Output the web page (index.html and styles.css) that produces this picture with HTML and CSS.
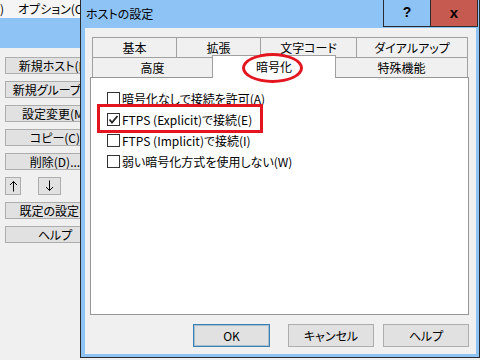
FILE: index.html
```html
<!DOCTYPE html>
<html lang="ja">
<head>
    <meta charset="UTF-8">
    <title>ホストの設定</title>
    <link rel="stylesheet" href="styles.css">
</head>
<body>

    <div class="app">
        <div class="menubar">
            <span class="menu-cut">)</span>
            <span class="menu-item">オプション(O)</span>
        </div>
        <div class="toolbar"></div>
        <div class="side">
            <button class="side-btn">新規ホスト(N)</button>
            <button class="side-btn">新規グループ(G)</button>
            <button class="side-btn">設定変更(M)</button>
            <button class="side-btn">コピー(C)</button>
            <button class="side-btn">削除(D)...</button>
            <div class="arrows">
                <button class="side-btn up">
                    <svg width="9" height="12" viewBox="0 0 9 12"><path d="M4.5 1.5V11.5M1 5L4.5 1.5L8 5" fill="none" stroke="#000" stroke-width="1"/></svg>
                </button>
                <button class="side-btn down">
                    <svg width="9" height="12" viewBox="0 0 9 12"><path d="M4.5 0.5V10.5M1 7L4.5 10.5L8 7" fill="none" stroke="#000" stroke-width="1"/></svg>
                </button>
            </div>
            <button class="side-btn">既定の設定(I)</button>
            <button class="side-btn">ヘルプ</button>
        </div>
    </div>

    <div class="dialog">
        <div class="titlebar">
            <span class="title">ホストの設定</span>
            <span class="cap-btn help">?</span>
            <span class="cap-btn close">x</span>
        </div>
        <div class="client">
            <div class="tab-row">
                <div class="tab w85">基本</div>
                <div class="tab w85">拡張</div>
                <div class="tab w97">文字コード</div>
                <div class="tab w112">ダイアルアップ</div>
            </div>
            <div class="tab-row">
                <div class="tab w121">高度</div>
                <div class="tab w124 active">暗号化</div>
                <div class="tab w133">特殊機能</div>
            </div>
            <div class="panel">
                <label class="check"><span class="box"></span><span>暗号化なしで接続を許可(A)</span></label>
                <label class="check">
                    <span class="box">
                        <svg width="11" height="11" viewBox="0 0 11 11"><polyline points="1.5,5.5 4,8.5 9.5,2" fill="none" stroke="#222" stroke-width="1.8"/></svg>
                    </span>
                    <span>FTPS (Explicit)で接続(E)</span>
                </label>
                <label class="check"><span class="box"></span><span>FTPS (Implicit)で接続(I)</span></label>
                <label class="check"><span class="box"></span><span>弱い暗号化方式を使用しない(W)</span></label>
            </div>
            <div class="actions">
                <button class="btn ok">OK</button>
                <button class="btn cancel">キャンセル</button>
                <button class="btn help-btn">ヘルプ</button>
            </div>
        </div>
    </div>

    <!-- red annotation marks -->
    <div class="mark-rect"></div>
    <div class="mark-ellipse"></div>

</body>
</html>
```

FILE: styles.css
```css
body {
    margin: 0;
    width: 480px;
    height: 360px;
    overflow: hidden;
    position: relative;
    background-color: #f0f0f0;
    font-family: "Noto Sans CJK JP", "Noto Sans", sans-serif;
    font-size: 12px;
    font-feature-settings: "palt";
    color: #000;
}
button {
    font-family: inherit;
    font-size: 12px;
    font-feature-settings: "palt";
    color: #000;
    padding: 0;
    margin: 0;
    cursor: default;
}
.menubar {
    height: 18px;
    display: flex;
    align-items: center;
    background: #f5f5f5;
    line-height: 18px;
}
.menu-cut {
    width: 18px;
}
.toolbar {
    height: 30px;
    background-color: #8ec3f5;
}
.side {
    display: flex;
    flex-direction: column;
    gap: 7px;
    padding: 9px 0 0 5px;
}
.side-btn {
    width: 100px;
    height: 17px;
    line-height: 15px;
    background: #e1e1e1;
    border: 1px solid #adadad;
    white-space: nowrap;
    overflow: hidden;
}
.arrows {
    display: flex;
    height: 18px;
}
.side-btn.up,
.side-btn.down {
    height: 18px;
    display: flex;
    align-items: center;
    justify-content: center;
}
.side-btn.up {
    width: 16px;
}
.side-btn.down {
    width: 23px;
    margin-left: 17px;
}
.dialog {
    position: absolute;
    left: 80px;
    top: 0;
    width: 398px;
    height: 357px;
    border: 1px solid #2b2b2b;
    border-top: none;
    background-color: #8ec3f5;
}
.titlebar {
    height: 28px;
    display: flex;
    align-items: flex-start;
}
.title {
    flex: 1;
    padding-left: 5px;
    line-height: 27px;
}
.cap-btn {
    box-sizing: border-box;
    width: 48px;
    height: 27px;
    border: 1px solid #2b2b2b;
    border-top: none;
    text-align: center;
    line-height: 25px;
    font-family: "Liberation Sans", sans-serif;
    font-weight: bold;
    font-size: 14px;
}
.close {
    margin-left: -1px;
    margin-right: 1px;
    background-color: #c75a50;
    font-size: 15px;
}
.client {
    width: 391px;
    height: 317px;
    margin-left: 4px;
    padding-top: 9px;
    background-color: #f0f0f0;
}
.tab-row {
    display: flex;
    align-items: flex-start;
    height: 20px;
    margin-left: 7px;
}
.tab {
    box-sizing: border-box;
    height: 20px;
    margin-right: -1px;
    border: 1px solid #a0a0a0;
    border-bottom: none;
    background: #f0f0f0;
    text-align: center;
    line-height: 19px;
}
.tab.active {
    position: relative;
    z-index: 1;
    height: 23px;
    margin-top: -2px;
    margin-bottom: -1px;
    background: #fff;
    line-height: 22px;
}
.w85 { width: 85px; }
.w97 { width: 97px; }
.w112 { width: 112px; }
.w121 { width: 121px; }
.w124 { width: 124px; }
.w133 { width: 133px; }
.panel {
    box-sizing: border-box;
    width: 379px;
    height: 238px;
    margin-left: 5px;
    padding: 10px 0 0 16px;
    border: 1px solid #969696;
    background: #fff;
}
.check {
    display: flex;
    align-items: center;
    gap: 2px;
    height: 21px;
    white-space: nowrap;
}
.box {
    box-sizing: border-box;
    width: 13px;
    height: 13px;
    border: 1px solid #333;
    background: #fff;
    display: flex;
    align-items: center;
    justify-content: center;
}
.actions {
    display: flex;
    justify-content: flex-end;
    margin-top: 9px;
    padding-right: 7px;
}
.btn {
    box-sizing: border-box;
    height: 23px;
    width: 86px;
    background: #e1e1e1;
    border: 1px solid #adadad;
}
.btn.ok {
    width: 77px;
    margin-right: 18px;
    border-color: #3c7fb1;
    box-shadow: inset 0 0 0 1px rgba(60, 127, 177, 0.35);
}
.btn.cancel {
    margin-right: 9px;
}
.mark-rect,
.mark-ellipse {
    position: absolute;
    z-index: 5;
    border: 3px solid #e3151f;
}
.mark-rect {
    left: 97px;
    top: 104px;
    width: 160px;
    height: 23px;
}
.mark-ellipse {
    left: 242px;
    top: 53px;
    width: 55px;
    height: 24px;
    border-radius: 50%;
}
```
